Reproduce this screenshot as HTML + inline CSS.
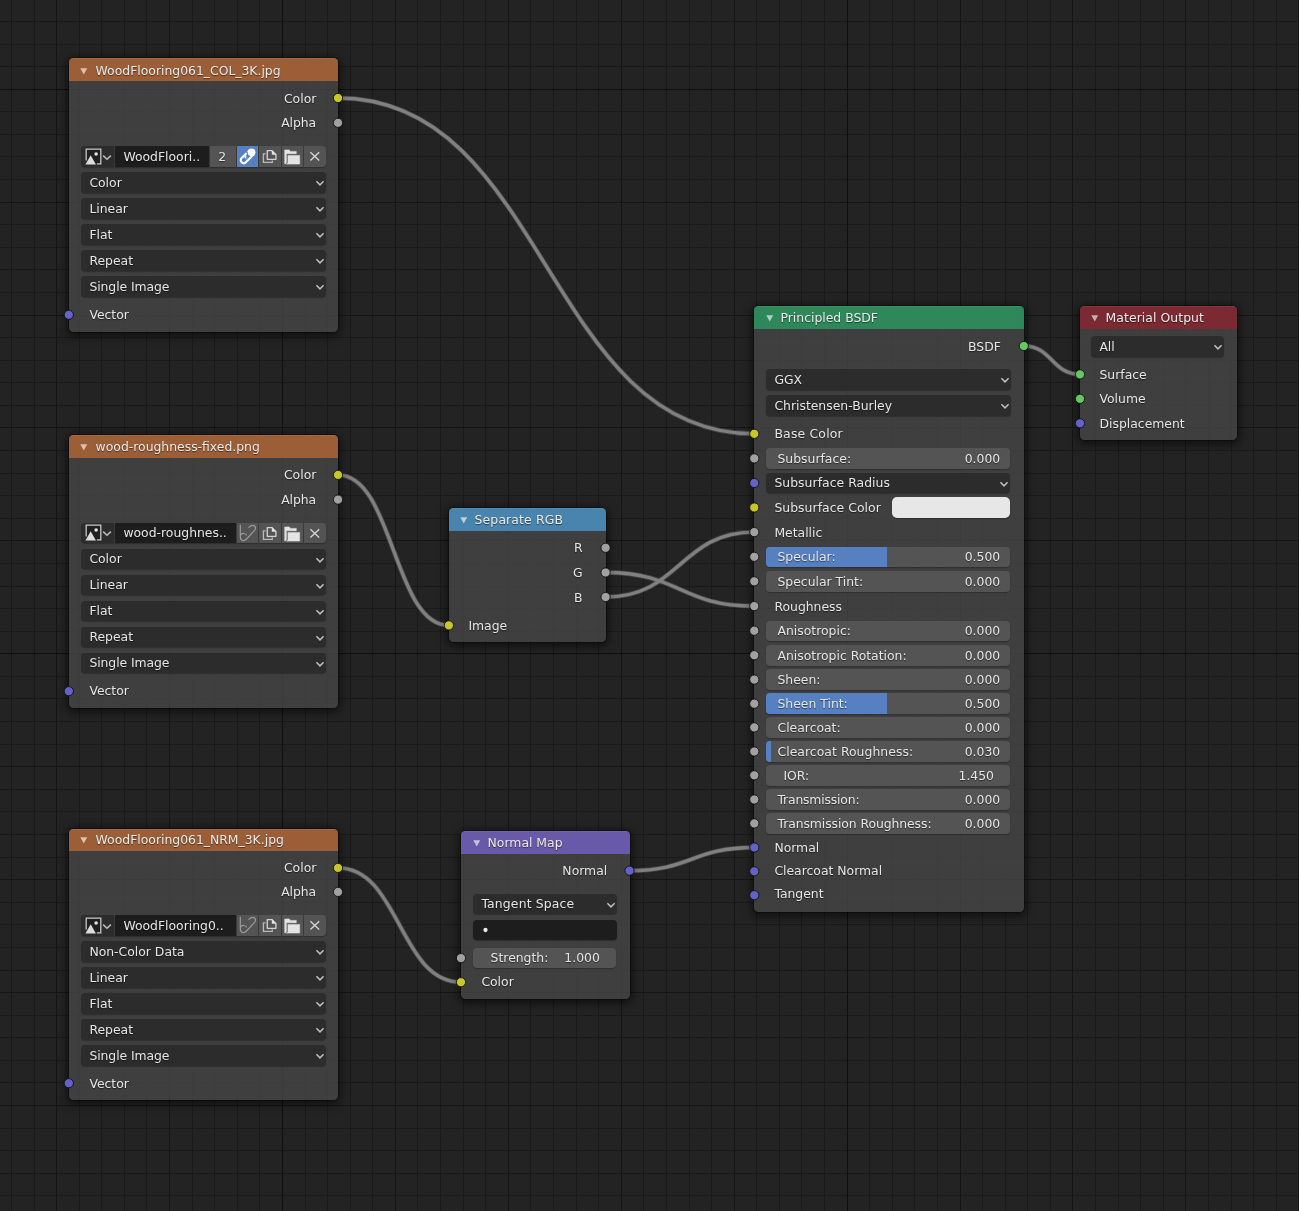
<!DOCTYPE html>
<html><head><meta charset="utf-8"><title>Shader Node Editor</title><style>
html,body{margin:0;padding:0}
body{width:1299px;height:1211px;overflow:hidden;background:#232323;position:relative;
 font-family:"DejaVu Sans","Liberation Sans",sans-serif;font-size:12.4px;color:#e6e6e6}
.abs{position:absolute;display:block}
.layer{position:absolute;left:0;top:0}
.t{position:absolute;white-space:nowrap;letter-spacing:0px;line-height:16px;height:16px;text-shadow:0 1px 1px rgba(0,0,0,0.55)}
.title{color:#ececec}
.node{position:absolute;border-radius:4.5px;background:rgba(70,70,70,0.80);overflow:hidden;
 box-shadow:0 0 0 0.8px rgba(0,0,0,0.4),0 2px 10px 2px rgba(0,0,0,0.6)}
.hd{position:absolute;left:0;top:0;right:0;opacity:0.97;box-shadow:inset 0 1px 0 rgba(255,255,255,0.07)}
.dd{position:absolute;background:#2c2c2c;border-radius:4px;box-shadow:0 1px 1px rgba(0,0,0,0.25)}
.tf{position:absolute;background:#1d1d1d;box-shadow:0 1px 1px rgba(0,0,0,0.25)}
.btn{position:absolute;background:#545454;box-shadow:0 1px 1px rgba(0,0,0,0.25)}
.nf{position:absolute;background:#545454;border-radius:4px;overflow:hidden;box-shadow:0 1px 1px rgba(0,0,0,0.25)}
.nf .fill{position:absolute;left:0;top:0;bottom:0;background:#5680c2}
.sw{position:absolute;background:#e7e7e7;border-radius:5px;box-shadow:0 1px 1px rgba(0,0,0,0.25)}
</style></head><body>
<svg class="layer" width="1299" height="1211" viewBox="0 0 1299 1211" shape-rendering="crispEdges"><rect x="11" y="0" width="1" height="1211" fill="#1a1a1a"/><rect x="34" y="0" width="1" height="1211" fill="#1a1a1a"/><rect x="79" y="0" width="1" height="1211" fill="#1a1a1a"/><rect x="101" y="0" width="1" height="1211" fill="#1a1a1a"/><rect x="124" y="0" width="1" height="1211" fill="#1a1a1a"/><rect x="146" y="0" width="1" height="1211" fill="#1a1a1a"/><rect x="192" y="0" width="1" height="1211" fill="#1a1a1a"/><rect x="214" y="0" width="1" height="1211" fill="#1a1a1a"/><rect x="237" y="0" width="1" height="1211" fill="#1a1a1a"/><rect x="259" y="0" width="1" height="1211" fill="#1a1a1a"/><rect x="305" y="0" width="1" height="1211" fill="#1a1a1a"/><rect x="327" y="0" width="1" height="1211" fill="#1a1a1a"/><rect x="350" y="0" width="1" height="1211" fill="#1a1a1a"/><rect x="372" y="0" width="1" height="1211" fill="#1a1a1a"/><rect x="417" y="0" width="1" height="1211" fill="#1a1a1a"/><rect x="440" y="0" width="1" height="1211" fill="#1a1a1a"/><rect x="463" y="0" width="1" height="1211" fill="#1a1a1a"/><rect x="485" y="0" width="1" height="1211" fill="#1a1a1a"/><rect x="530" y="0" width="1" height="1211" fill="#1a1a1a"/><rect x="553" y="0" width="1" height="1211" fill="#1a1a1a"/><rect x="576" y="0" width="1" height="1211" fill="#1a1a1a"/><rect x="598" y="0" width="1" height="1211" fill="#1a1a1a"/><rect x="643" y="0" width="1" height="1211" fill="#1a1a1a"/><rect x="666" y="0" width="1" height="1211" fill="#1a1a1a"/><rect x="689" y="0" width="1" height="1211" fill="#1a1a1a"/><rect x="711" y="0" width="1" height="1211" fill="#1a1a1a"/><rect x="756" y="0" width="1" height="1211" fill="#1a1a1a"/><rect x="779" y="0" width="1" height="1211" fill="#1a1a1a"/><rect x="801" y="0" width="1" height="1211" fill="#1a1a1a"/><rect x="824" y="0" width="1" height="1211" fill="#1a1a1a"/><rect x="869" y="0" width="1" height="1211" fill="#1a1a1a"/><rect x="892" y="0" width="1" height="1211" fill="#1a1a1a"/><rect x="914" y="0" width="1" height="1211" fill="#1a1a1a"/><rect x="937" y="0" width="1" height="1211" fill="#1a1a1a"/><rect x="982" y="0" width="1" height="1211" fill="#1a1a1a"/><rect x="1005" y="0" width="1" height="1211" fill="#1a1a1a"/><rect x="1027" y="0" width="1" height="1211" fill="#1a1a1a"/><rect x="1050" y="0" width="1" height="1211" fill="#1a1a1a"/><rect x="1095" y="0" width="1" height="1211" fill="#1a1a1a"/><rect x="1118" y="0" width="1" height="1211" fill="#1a1a1a"/><rect x="1140" y="0" width="1" height="1211" fill="#1a1a1a"/><rect x="1163" y="0" width="1" height="1211" fill="#1a1a1a"/><rect x="1208" y="0" width="1" height="1211" fill="#1a1a1a"/><rect x="1231" y="0" width="1" height="1211" fill="#1a1a1a"/><rect x="1253" y="0" width="1" height="1211" fill="#1a1a1a"/><rect x="1276" y="0" width="1" height="1211" fill="#1a1a1a"/><rect x="0" y="21" width="1299" height="1" fill="#1a1a1a"/><rect x="0" y="44" width="1299" height="1" fill="#1a1a1a"/><rect x="0" y="66" width="1299" height="1" fill="#1a1a1a"/><rect x="0" y="111" width="1299" height="1" fill="#1a1a1a"/><rect x="0" y="134" width="1299" height="1" fill="#1a1a1a"/><rect x="0" y="156" width="1299" height="1" fill="#1a1a1a"/><rect x="0" y="179" width="1299" height="1" fill="#1a1a1a"/><rect x="0" y="224" width="1299" height="1" fill="#1a1a1a"/><rect x="0" y="247" width="1299" height="1" fill="#1a1a1a"/><rect x="0" y="269" width="1299" height="1" fill="#1a1a1a"/><rect x="0" y="292" width="1299" height="1" fill="#1a1a1a"/><rect x="0" y="337" width="1299" height="1" fill="#1a1a1a"/><rect x="0" y="360" width="1299" height="1" fill="#1a1a1a"/><rect x="0" y="382" width="1299" height="1" fill="#1a1a1a"/><rect x="0" y="405" width="1299" height="1" fill="#1a1a1a"/><rect x="0" y="450" width="1299" height="1" fill="#1a1a1a"/><rect x="0" y="473" width="1299" height="1" fill="#1a1a1a"/><rect x="0" y="495" width="1299" height="1" fill="#1a1a1a"/><rect x="0" y="518" width="1299" height="1" fill="#1a1a1a"/><rect x="0" y="563" width="1299" height="1" fill="#1a1a1a"/><rect x="0" y="586" width="1299" height="1" fill="#1a1a1a"/><rect x="0" y="608" width="1299" height="1" fill="#1a1a1a"/><rect x="0" y="631" width="1299" height="1" fill="#1a1a1a"/><rect x="0" y="676" width="1299" height="1" fill="#1a1a1a"/><rect x="0" y="698" width="1299" height="1" fill="#1a1a1a"/><rect x="0" y="721" width="1299" height="1" fill="#1a1a1a"/><rect x="0" y="744" width="1299" height="1" fill="#1a1a1a"/><rect x="0" y="789" width="1299" height="1" fill="#1a1a1a"/><rect x="0" y="811" width="1299" height="1" fill="#1a1a1a"/><rect x="0" y="834" width="1299" height="1" fill="#1a1a1a"/><rect x="0" y="857" width="1299" height="1" fill="#1a1a1a"/><rect x="0" y="902" width="1299" height="1" fill="#1a1a1a"/><rect x="0" y="924" width="1299" height="1" fill="#1a1a1a"/><rect x="0" y="947" width="1299" height="1" fill="#1a1a1a"/><rect x="0" y="970" width="1299" height="1" fill="#1a1a1a"/><rect x="0" y="1015" width="1299" height="1" fill="#1a1a1a"/><rect x="0" y="1037" width="1299" height="1" fill="#1a1a1a"/><rect x="0" y="1060" width="1299" height="1" fill="#1a1a1a"/><rect x="0" y="1082" width="1299" height="1" fill="#1a1a1a"/><rect x="0" y="1128" width="1299" height="1" fill="#1a1a1a"/><rect x="0" y="1150" width="1299" height="1" fill="#1a1a1a"/><rect x="0" y="1173" width="1299" height="1" fill="#1a1a1a"/><rect x="0" y="1195" width="1299" height="1" fill="#1a1a1a"/><rect x="56" y="0" width="1" height="1211" fill="#151515"/><rect x="169" y="0" width="1" height="1211" fill="#151515"/><rect x="395" y="0" width="1" height="1211" fill="#151515"/><rect x="508" y="0" width="1" height="1211" fill="#151515"/><rect x="621" y="0" width="1" height="1211" fill="#151515"/><rect x="734" y="0" width="1" height="1211" fill="#151515"/><rect x="960" y="0" width="1" height="1211" fill="#151515"/><rect x="1072" y="0" width="1" height="1211" fill="#151515"/><rect x="1185" y="0" width="1" height="1211" fill="#151515"/><rect x="1298" y="0" width="1" height="1211" fill="#151515"/><rect x="0" y="202" width="1299" height="1" fill="#151515"/><rect x="0" y="315" width="1299" height="1" fill="#151515"/><rect x="0" y="427" width="1299" height="1" fill="#151515"/><rect x="0" y="540" width="1299" height="1" fill="#151515"/><rect x="0" y="766" width="1299" height="1" fill="#151515"/><rect x="0" y="879" width="1299" height="1" fill="#151515"/><rect x="0" y="992" width="1299" height="1" fill="#151515"/><rect x="0" y="1105" width="1299" height="1" fill="#151515"/><rect x="282" y="0" width="1" height="1211" fill="#0f0f0f"/><rect x="847" y="0" width="1" height="1211" fill="#0f0f0f"/><rect x="0" y="89" width="1299" height="1" fill="#0f0f0f"/><rect x="0" y="653" width="1299" height="1" fill="#0f0f0f"/></svg>
<svg class="layer" width="1299" height="1211" viewBox="0 0 1299 1211"><path d="M338.00 98.00 C546.15 98.00 546.15 433.80 754.30 433.80" stroke="#808080" stroke-opacity="0.35" stroke-width="5.0" fill="none"/><path d="M338.00 98.00 C546.15 98.00 546.15 433.80 754.30 433.80" stroke="#808080" stroke-width="3.3" fill="none"/><path d="M338.00 474.90 C393.45 474.90 393.45 625.40 448.90 625.40" stroke="#808080" stroke-opacity="0.35" stroke-width="5.0" fill="none"/><path d="M338.00 474.90 C393.45 474.90 393.45 625.40 448.90 625.40" stroke="#808080" stroke-width="3.3" fill="none"/><path d="M605.60 572.50 C679.95 572.50 679.95 606.10 754.30 606.10" stroke="#808080" stroke-opacity="0.35" stroke-width="5.0" fill="none"/><path d="M605.60 572.50 C679.95 572.50 679.95 606.10 754.30 606.10" stroke="#808080" stroke-width="3.3" fill="none"/><path d="M605.60 597.00 C679.95 597.00 679.95 532.10 754.30 532.10" stroke="#808080" stroke-opacity="0.35" stroke-width="5.0" fill="none"/><path d="M605.60 597.00 C679.95 597.00 679.95 532.10 754.30 532.10" stroke="#808080" stroke-width="3.3" fill="none"/><path d="M338.00 867.90 C399.50 867.90 399.50 982.20 461.00 982.20" stroke="#808080" stroke-opacity="0.35" stroke-width="5.0" fill="none"/><path d="M338.00 867.90 C399.50 867.90 399.50 982.20 461.00 982.20" stroke="#808080" stroke-width="3.3" fill="none"/><path d="M629.50 870.70 C691.90 870.70 691.90 847.50 754.30 847.50" stroke="#808080" stroke-opacity="0.35" stroke-width="5.0" fill="none"/><path d="M629.50 870.70 C691.90 870.70 691.90 847.50 754.30 847.50" stroke="#808080" stroke-width="3.3" fill="none"/><path d="M1023.80 346.00 C1051.90 346.00 1051.90 374.40 1080.00 374.40" stroke="#808080" stroke-opacity="0.35" stroke-width="5.0" fill="none"/><path d="M1023.80 346.00 C1051.90 346.00 1051.90 374.40 1080.00 374.40" stroke="#808080" stroke-width="3.3" fill="none"/></svg>
<div id="ui" style="position:absolute;left:0;top:0;width:1299px;height:1211px;will-change:transform">
<div class="node" style="left:69.10px;top:58.10px;width:269.00px;height:273.65px;"><div class="hd" style="height:22.90px;background:#a06138"></div></div>
<svg class="abs" style="left:80.00px;top:68.20px" width="8" height="7" viewBox="0 0 8 7"><path d="M0.3 0.3 L7.2 0.3 L3.75 6.6 Z" fill="rgba(255,255,255,0.62)"/></svg>
<div class="t title" style="left:95.60px;top:63px;">WoodFlooring061_COL_3K.jpg</div>
<div class="t " style="right:982.70px;top:91px;text-align:right;">Color</div>
<div class="t " style="right:983.00px;top:115px;text-align:right;letter-spacing:-0.08px;">Alpha</div>
<div class="dd" style="left:81px;top:146px;width:33px;height:21px;border-radius:4px 0 0 4px"></div>
<svg class="abs" style="left:85.00px;top:147.60px" width="18" height="18" viewBox="0 0 18 18">
<path d="M1.2 12.6 V1.2 H15.8 V15.9 H11.9" fill="none" stroke="#c6c6c6" stroke-width="1.3"/>
<rect x="2.0" y="2.0" width="13.0" height="13.0" fill="#202020"/>
<path d="M0.5 16.5 L5.7 7.2 L10.9 16.5 Z" fill="#dcdcdc"/>
<circle cx="11.1" cy="6.0" r="1.8" fill="#e2e2e2"/></svg>
<svg class="abs" style="left:102.40px;top:153.60px" width="10" height="7" viewBox="0 0 10 7"><path d="M1.15 1.6 L5.0 5.3 L8.85 1.6" fill="none" stroke="#bcbcbc" stroke-width="1.5"/></svg>
<div class="tf" style="left:115px;top:146px;width:94px;height:21px;"></div>
<div class="btn" style="left:210px;top:146px;width:26px;height:21px;"></div>
<div class="t " style="left:209.30px;width:26.00px;top:149px;text-align:center;">2</div>
<div class="btn" style="left:237px;top:146px;width:21px;height:21px;background:#5680c2"></div>
<svg class="abs" style="left:237.00px;top:146.00px" width="21" height="21" viewBox="0 0 21 21">
<path d="M12.85 8.05 L14.6 6.3" stroke="#fff" stroke-width="7.7" fill="none"/>
<circle cx="14.6" cy="6.3" r="3.85" fill="#fff"/>
<path d="M9.0 7.7 L4.61 12.11 A2.95 2.95 0 0 0 8.79 16.29 L14.94 10.14" stroke="#fff" stroke-width="2.1" stroke-linecap="round" fill="none"/>
<path d="M7.9 9.7 L9.0 12.6 M7.5 11.3 L9.6 10.7" stroke="#fff" stroke-width="1.1" fill="none"/>
</svg>
<div class="t " style="left:123.40px;top:149px;">WoodFloori..</div>
<div class="btn" style="left:259px;top:146px;width:22px;height:21px;"></div>
<svg class="abs" style="left:262.30px;top:148.90px" width="16" height="16" viewBox="0 0 16 16">
<path d="M3.6 4.9 H1.4 V13.4 H10.3 V11.6" fill="none" stroke="#b8b8b8" stroke-width="1.3"/>
<path d="M5.25 1.65 H10.0 L13.95 5.6 V10.35 H5.25 Z" fill="none" stroke="#d4d4d4" stroke-width="1.3" stroke-linejoin="round"/>
<path d="M9.8 1.0 L14.6 5.8 H9.8 Z" fill="#e2e2e2"/></svg>
<div class="btn" style="left:282px;top:146px;width:21px;height:21px;"></div>
<svg class="abs" style="left:284.40px;top:148.90px" width="17" height="16" viewBox="0 0 17 16">
<path d="M0.7 0.9 H5.4 L6.2 2.4 H12.3 V4.7 H2.4 V13.6 Q2.4 14.9 0.7 14.9 Z" fill="#e4e4e4" stroke="#e4e4e4" stroke-width="0.5" stroke-linejoin="round"/>
<path d="M3.9 6.4 H15.7 V15.1 H2.4 Q3.9 15.1 3.9 13.6 Z" fill="#e4e4e4" stroke="#e4e4e4" stroke-width="0.5" stroke-linejoin="round"/></svg>
<div class="btn" style="left:304px;top:146px;width:22px;height:21px;border-radius:0 4px 4px 0"></div>
<svg class="abs" style="left:309.30px;top:151.10px" width="12" height="11" viewBox="0 0 12 11">
<path d="M1.4 1.35 L10.2 9.5 M10.2 1.35 L1.4 9.5" fill="none" stroke="#d6d6d6" stroke-width="1.35"/></svg>
<div class="dd" style="left:81px;top:172px;width:245px;height:21px;"></div>
<div class="t " style="left:89.40px;top:175px;">Color</div>
<svg class="abs" style="left:313.70px;top:178.10px" width="12" height="10" viewBox="0 0 12 10"><path d="M2.40 3.15 L6 6.85 L9.60 3.15" fill="none" stroke="#c0c0c0" stroke-width="1.45"/></svg>
<div class="dd" style="left:81px;top:198px;width:245px;height:21px;"></div>
<div class="t " style="left:89.40px;top:201px;">Linear</div>
<svg class="abs" style="left:313.70px;top:204.10px" width="12" height="10" viewBox="0 0 12 10"><path d="M2.40 3.15 L6 6.85 L9.60 3.15" fill="none" stroke="#c0c0c0" stroke-width="1.45"/></svg>
<div class="dd" style="left:81px;top:224px;width:245px;height:21px;"></div>
<div class="t " style="left:89.40px;top:227px;">Flat</div>
<svg class="abs" style="left:313.70px;top:230.10px" width="12" height="10" viewBox="0 0 12 10"><path d="M2.40 3.15 L6 6.85 L9.60 3.15" fill="none" stroke="#c0c0c0" stroke-width="1.45"/></svg>
<div class="dd" style="left:81px;top:250px;width:245px;height:21px;"></div>
<div class="t " style="left:89.40px;top:253px;">Repeat</div>
<svg class="abs" style="left:313.70px;top:256.10px" width="12" height="10" viewBox="0 0 12 10"><path d="M2.40 3.15 L6 6.85 L9.60 3.15" fill="none" stroke="#c0c0c0" stroke-width="1.45"/></svg>
<div class="dd" style="left:81px;top:276px;width:245px;height:21px;"></div>
<div class="t " style="left:89.40px;top:279px;letter-spacing:-0.07px;">Single Image</div>
<svg class="abs" style="left:313.70px;top:282.10px" width="12" height="10" viewBox="0 0 12 10"><path d="M2.40 3.15 L6 6.85 L9.60 3.15" fill="none" stroke="#c0c0c0" stroke-width="1.45"/></svg>
<div class="t " style="left:89.40px;top:307px;">Vector</div>
<div class="node" style="left:69.10px;top:434.70px;width:269.00px;height:273.05px;"><div class="hd" style="height:23.20px;background:#a06138"></div></div>
<svg class="abs" style="left:80.00px;top:444.20px" width="8" height="7" viewBox="0 0 8 7"><path d="M0.3 0.3 L7.2 0.3 L3.75 6.6 Z" fill="rgba(255,255,255,0.62)"/></svg>
<div class="t title" style="left:95.60px;top:439px;">wood-roughness-fixed.png</div>
<div class="t " style="right:982.70px;top:467px;text-align:right;">Color</div>
<div class="t " style="right:983.00px;top:492px;text-align:right;letter-spacing:-0.08px;">Alpha</div>
<div class="dd" style="left:81px;top:523px;width:33px;height:20px;border-radius:4px 0 0 4px"></div>
<svg class="abs" style="left:85.00px;top:524.20px" width="18" height="18" viewBox="0 0 18 18">
<path d="M1.2 12.6 V1.2 H15.8 V15.9 H11.9" fill="none" stroke="#c6c6c6" stroke-width="1.3"/>
<rect x="2.0" y="2.0" width="13.0" height="13.0" fill="#202020"/>
<path d="M0.5 16.5 L5.7 7.2 L10.9 16.5 Z" fill="#dcdcdc"/>
<circle cx="11.1" cy="6.0" r="1.8" fill="#e2e2e2"/></svg>
<svg class="abs" style="left:102.40px;top:530.20px" width="10" height="7" viewBox="0 0 10 7"><path d="M1.15 1.6 L5.0 5.3 L8.85 1.6" fill="none" stroke="#bcbcbc" stroke-width="1.5"/></svg>
<div class="tf" style="left:115px;top:523px;width:121px;height:20px;"></div>
<div class="btn" style="left:237px;top:523px;width:21px;height:20px;"></div>
<svg class="abs" style="left:237.00px;top:523.00px" width="21" height="21" viewBox="0 0 21 21">
<path d="M3.35 2.1 V13.5 C3.35 16.5 5 17.7 6.6 17.7 C8 17.7 9 16.6 10 15.5 L17.4 7.6 C19 5.6 18.8 3.4 17 2.6 C15.4 1.9 13.5 2.8 12 4.2 M3.9 11.5 C5.5 10 7.8 10.2 9.3 11.9" stroke="#989898" stroke-width="1.25" fill="none" stroke-linecap="round"/>
</svg>
<div class="t " style="left:123.40px;top:525px;">wood-roughnes..</div>
<div class="btn" style="left:259px;top:523px;width:22px;height:20px;"></div>
<svg class="abs" style="left:262.30px;top:525.50px" width="16" height="16" viewBox="0 0 16 16">
<path d="M3.6 4.9 H1.4 V13.4 H10.3 V11.6" fill="none" stroke="#b8b8b8" stroke-width="1.3"/>
<path d="M5.25 1.65 H10.0 L13.95 5.6 V10.35 H5.25 Z" fill="none" stroke="#d4d4d4" stroke-width="1.3" stroke-linejoin="round"/>
<path d="M9.8 1.0 L14.6 5.8 H9.8 Z" fill="#e2e2e2"/></svg>
<div class="btn" style="left:282px;top:523px;width:21px;height:20px;"></div>
<svg class="abs" style="left:284.40px;top:525.50px" width="17" height="16" viewBox="0 0 17 16">
<path d="M0.7 0.9 H5.4 L6.2 2.4 H12.3 V4.7 H2.4 V13.6 Q2.4 14.9 0.7 14.9 Z" fill="#e4e4e4" stroke="#e4e4e4" stroke-width="0.5" stroke-linejoin="round"/>
<path d="M3.9 6.4 H15.7 V15.1 H2.4 Q3.9 15.1 3.9 13.6 Z" fill="#e4e4e4" stroke="#e4e4e4" stroke-width="0.5" stroke-linejoin="round"/></svg>
<div class="btn" style="left:304px;top:523px;width:22px;height:20px;border-radius:0 4px 4px 0"></div>
<svg class="abs" style="left:309.30px;top:527.70px" width="12" height="11" viewBox="0 0 12 11">
<path d="M1.4 1.35 L10.2 9.5 M10.2 1.35 L1.4 9.5" fill="none" stroke="#d6d6d6" stroke-width="1.35"/></svg>
<div class="dd" style="left:81px;top:549px;width:245px;height:20px;"></div>
<div class="t " style="left:89.40px;top:551px;">Color</div>
<svg class="abs" style="left:313.70px;top:554.75px" width="12" height="10" viewBox="0 0 12 10"><path d="M2.40 3.15 L6 6.85 L9.60 3.15" fill="none" stroke="#c0c0c0" stroke-width="1.45"/></svg>
<div class="dd" style="left:81px;top:575px;width:245px;height:20px;"></div>
<div class="t " style="left:89.40px;top:577px;">Linear</div>
<svg class="abs" style="left:313.70px;top:580.75px" width="12" height="10" viewBox="0 0 12 10"><path d="M2.40 3.15 L6 6.85 L9.60 3.15" fill="none" stroke="#c0c0c0" stroke-width="1.45"/></svg>
<div class="dd" style="left:81px;top:601px;width:245px;height:20px;"></div>
<div class="t " style="left:89.40px;top:603px;">Flat</div>
<svg class="abs" style="left:313.70px;top:606.75px" width="12" height="10" viewBox="0 0 12 10"><path d="M2.40 3.15 L6 6.85 L9.60 3.15" fill="none" stroke="#c0c0c0" stroke-width="1.45"/></svg>
<div class="dd" style="left:81px;top:627px;width:245px;height:20px;"></div>
<div class="t " style="left:89.40px;top:629px;">Repeat</div>
<svg class="abs" style="left:313.70px;top:632.75px" width="12" height="10" viewBox="0 0 12 10"><path d="M2.40 3.15 L6 6.85 L9.60 3.15" fill="none" stroke="#c0c0c0" stroke-width="1.45"/></svg>
<div class="dd" style="left:81px;top:653px;width:245px;height:20px;"></div>
<div class="t " style="left:89.40px;top:655px;letter-spacing:-0.07px;">Single Image</div>
<svg class="abs" style="left:313.70px;top:658.75px" width="12" height="10" viewBox="0 0 12 10"><path d="M2.40 3.15 L6 6.85 L9.60 3.15" fill="none" stroke="#c0c0c0" stroke-width="1.45"/></svg>
<div class="t " style="left:89.40px;top:683px;">Vector</div>
<div class="node" style="left:69.10px;top:828.70px;width:269.00px;height:271.20px;"><div class="hd" style="height:22.40px;background:#a06138"></div></div>
<svg class="abs" style="left:80.00px;top:837.20px" width="8" height="7" viewBox="0 0 8 7"><path d="M0.3 0.3 L7.2 0.3 L3.75 6.6 Z" fill="rgba(255,255,255,0.62)"/></svg>
<div class="t title" style="left:95.60px;top:832px;">WoodFlooring061_NRM_3K.jpg</div>
<div class="t " style="right:982.70px;top:860px;text-align:right;">Color</div>
<div class="t " style="right:983.00px;top:884px;text-align:right;letter-spacing:-0.08px;">Alpha</div>
<div class="dd" style="left:81px;top:915px;width:33px;height:21px;border-radius:4px 0 0 4px"></div>
<svg class="abs" style="left:85.00px;top:916.60px" width="18" height="18" viewBox="0 0 18 18">
<path d="M1.2 12.6 V1.2 H15.8 V15.9 H11.9" fill="none" stroke="#c6c6c6" stroke-width="1.3"/>
<rect x="2.0" y="2.0" width="13.0" height="13.0" fill="#202020"/>
<path d="M0.5 16.5 L5.7 7.2 L10.9 16.5 Z" fill="#dcdcdc"/>
<circle cx="11.1" cy="6.0" r="1.8" fill="#e2e2e2"/></svg>
<svg class="abs" style="left:102.40px;top:922.60px" width="10" height="7" viewBox="0 0 10 7"><path d="M1.15 1.6 L5.0 5.3 L8.85 1.6" fill="none" stroke="#bcbcbc" stroke-width="1.5"/></svg>
<div class="tf" style="left:115px;top:915px;width:121px;height:21px;"></div>
<div class="btn" style="left:237px;top:915px;width:21px;height:21px;"></div>
<svg class="abs" style="left:237.00px;top:915.00px" width="21" height="21" viewBox="0 0 21 21">
<path d="M3.35 2.1 V13.5 C3.35 16.5 5 17.7 6.6 17.7 C8 17.7 9 16.6 10 15.5 L17.4 7.6 C19 5.6 18.8 3.4 17 2.6 C15.4 1.9 13.5 2.8 12 4.2 M3.9 11.5 C5.5 10 7.8 10.2 9.3 11.9" stroke="#989898" stroke-width="1.25" fill="none" stroke-linecap="round"/>
</svg>
<div class="t " style="left:123.40px;top:918px;">WoodFlooring0..</div>
<div class="btn" style="left:259px;top:915px;width:22px;height:21px;"></div>
<svg class="abs" style="left:262.30px;top:917.90px" width="16" height="16" viewBox="0 0 16 16">
<path d="M3.6 4.9 H1.4 V13.4 H10.3 V11.6" fill="none" stroke="#b8b8b8" stroke-width="1.3"/>
<path d="M5.25 1.65 H10.0 L13.95 5.6 V10.35 H5.25 Z" fill="none" stroke="#d4d4d4" stroke-width="1.3" stroke-linejoin="round"/>
<path d="M9.8 1.0 L14.6 5.8 H9.8 Z" fill="#e2e2e2"/></svg>
<div class="btn" style="left:282px;top:915px;width:21px;height:21px;"></div>
<svg class="abs" style="left:284.40px;top:917.90px" width="17" height="16" viewBox="0 0 17 16">
<path d="M0.7 0.9 H5.4 L6.2 2.4 H12.3 V4.7 H2.4 V13.6 Q2.4 14.9 0.7 14.9 Z" fill="#e4e4e4" stroke="#e4e4e4" stroke-width="0.5" stroke-linejoin="round"/>
<path d="M3.9 6.4 H15.7 V15.1 H2.4 Q3.9 15.1 3.9 13.6 Z" fill="#e4e4e4" stroke="#e4e4e4" stroke-width="0.5" stroke-linejoin="round"/></svg>
<div class="btn" style="left:304px;top:915px;width:22px;height:21px;border-radius:0 4px 4px 0"></div>
<svg class="abs" style="left:309.30px;top:920.10px" width="12" height="11" viewBox="0 0 12 11">
<path d="M1.4 1.35 L10.2 9.5 M10.2 1.35 L1.4 9.5" fill="none" stroke="#d6d6d6" stroke-width="1.35"/></svg>
<div class="dd" style="left:81px;top:941px;width:245px;height:21px;"></div>
<div class="t " style="left:89.40px;top:944px;">Non-Color Data</div>
<svg class="abs" style="left:313.70px;top:947.10px" width="12" height="10" viewBox="0 0 12 10"><path d="M2.40 3.15 L6 6.85 L9.60 3.15" fill="none" stroke="#c0c0c0" stroke-width="1.45"/></svg>
<div class="dd" style="left:81px;top:967px;width:245px;height:21px;"></div>
<div class="t " style="left:89.40px;top:970px;">Linear</div>
<svg class="abs" style="left:313.70px;top:973.10px" width="12" height="10" viewBox="0 0 12 10"><path d="M2.40 3.15 L6 6.85 L9.60 3.15" fill="none" stroke="#c0c0c0" stroke-width="1.45"/></svg>
<div class="dd" style="left:81px;top:993px;width:245px;height:21px;"></div>
<div class="t " style="left:89.40px;top:996px;">Flat</div>
<svg class="abs" style="left:313.70px;top:999.10px" width="12" height="10" viewBox="0 0 12 10"><path d="M2.40 3.15 L6 6.85 L9.60 3.15" fill="none" stroke="#c0c0c0" stroke-width="1.45"/></svg>
<div class="dd" style="left:81px;top:1019px;width:245px;height:21px;"></div>
<div class="t " style="left:89.40px;top:1022px;">Repeat</div>
<svg class="abs" style="left:313.70px;top:1025.10px" width="12" height="10" viewBox="0 0 12 10"><path d="M2.40 3.15 L6 6.85 L9.60 3.15" fill="none" stroke="#c0c0c0" stroke-width="1.45"/></svg>
<div class="dd" style="left:81px;top:1045px;width:245px;height:21px;"></div>
<div class="t " style="left:89.40px;top:1048px;letter-spacing:-0.07px;">Single Image</div>
<svg class="abs" style="left:313.70px;top:1051.10px" width="12" height="10" viewBox="0 0 12 10"><path d="M2.40 3.15 L6 6.85 L9.60 3.15" fill="none" stroke="#c0c0c0" stroke-width="1.45"/></svg>
<div class="t " style="left:89.40px;top:1076px;">Vector</div>
<div class="node" style="left:448.70px;top:508.00px;width:157.20px;height:134.00px;"><div class="hd" style="height:22.80px;background:#4a88b2"></div></div>
<svg class="abs" style="left:459.70px;top:517.20px" width="8" height="7" viewBox="0 0 8 7"><path d="M0.3 0.3 L7.2 0.3 L3.75 6.6 Z" fill="rgba(255,255,255,0.62)"/></svg>
<div class="t title" style="left:474.60px;top:512px;letter-spacing:0.145px;">Separate RGB</div>
<div class="t " style="right:716.40px;top:540px;text-align:right;">R</div>
<div class="t " style="right:716.40px;top:565px;text-align:right;">G</div>
<div class="t " style="right:716.40px;top:590px;text-align:right;">B</div>
<div class="t " style="left:468.40px;top:618px;">Image</div>
<div class="node" style="left:461.00px;top:831.10px;width:168.60px;height:167.90px;"><div class="hd" style="height:22.80px;background:#6c5bae"></div></div>
<svg class="abs" style="left:472.60px;top:840.20px" width="8" height="7" viewBox="0 0 8 7"><path d="M0.3 0.3 L7.2 0.3 L3.75 6.6 Z" fill="rgba(255,255,255,0.62)"/></svg>
<div class="t title" style="left:487.60px;top:835px;">Normal Map</div>
<div class="t " style="right:691.80px;top:863px;text-align:right;">Normal</div>
<div class="dd" style="left:473px;top:894px;width:144px;height:20px;"></div>
<div class="t " style="left:481.40px;top:896px;letter-spacing:0.158px;">Tangent Space</div>
<svg class="abs" style="left:604.70px;top:899.75px" width="12" height="10" viewBox="0 0 12 10"><path d="M2.40 3.15 L6 6.85 L9.60 3.15" fill="none" stroke="#c0c0c0" stroke-width="1.45"/></svg>
<div class="tf" style="left:473px;top:920px;width:144px;height:20px;border-radius:4px"></div>
<svg class="abs" style="left:480px;top:925px" width="11" height="11" viewBox="0 0 11 11"><circle cx="5.5" cy="5.0" r="2.15" fill="#e8e8e8"/></svg>
<div class="nf" style="left:473px;top:948px;width:143px;height:20px;"></div>
<div class="t " style="left:490.60px;top:950px;">Strength:</div>
<div class="t " style="right:699.20px;top:950px;text-align:right;">1.000</div>
<div class="t " style="left:481.40px;top:974px;">Color</div>
<div class="node" style="left:754.30px;top:306.20px;width:269.70px;height:605.50px;"><div class="hd" style="height:22.80px;background:#2e8b5c"></div></div>
<svg class="abs" style="left:765.70px;top:315.20px" width="8" height="7" viewBox="0 0 8 7"><path d="M0.3 0.3 L7.2 0.3 L3.75 6.6 Z" fill="rgba(255,255,255,0.62)"/></svg>
<div class="t title" style="left:780.50px;top:310px;">Principled BSDF</div>
<div class="t " style="right:298.20px;top:339px;text-align:right;">BSDF</div>
<div class="dd" style="left:766px;top:369px;width:245px;height:21px;"></div>
<div class="t " style="left:774.40px;top:372px;">GGX</div>
<svg class="abs" style="left:998.70px;top:375.25px" width="12" height="10" viewBox="0 0 12 10"><path d="M2.40 3.15 L6 6.85 L9.60 3.15" fill="none" stroke="#c0c0c0" stroke-width="1.45"/></svg>
<div class="dd" style="left:766px;top:395px;width:245px;height:21px;"></div>
<div class="t " style="left:774.40px;top:398px;">Christensen-Burley</div>
<svg class="abs" style="left:998.70px;top:401.25px" width="12" height="10" viewBox="0 0 12 10"><path d="M2.40 3.15 L6 6.85 L9.60 3.15" fill="none" stroke="#c0c0c0" stroke-width="1.45"/></svg>
<div class="t " style="left:774.40px;top:426px;letter-spacing:0.2px;">Base Color</div>
<div class="nf" style="left:766px;top:448px;width:244px;height:21px;"></div>
<div class="t " style="left:777.50px;top:451px;">Subsurface:</div>
<div class="t " style="right:298.80px;top:451px;text-align:right;">0.000</div>
<div class="dd" style="left:766px;top:473px;width:244px;height:20px;"></div>
<div class="t " style="left:774.40px;top:475px;letter-spacing:0.044px;">Subsurface Radius</div>
<svg class="abs" style="left:997.70px;top:478.75px" width="12" height="10" viewBox="0 0 12 10"><path d="M2.40 3.15 L6 6.85 L9.60 3.15" fill="none" stroke="#c0c0c0" stroke-width="1.45"/></svg>
<div class="t " style="left:774.40px;top:500px;letter-spacing:0.047px;">Subsurface Color</div>
<div class="sw" style="left:892px;top:497px;width:118px;height:21px;"></div>
<div class="t " style="left:774.40px;top:525px;">Metallic</div>
<div class="nf" style="left:766px;top:547px;width:244px;height:20px;"><div class="fill" style="width:121px"></div></div>
<div class="t " style="left:777.50px;top:549px;">Specular:</div>
<div class="t " style="right:298.80px;top:549px;text-align:right;">0.500</div>
<div class="nf" style="left:766px;top:571px;width:244px;height:21px;"></div>
<div class="t " style="left:777.50px;top:574px;">Specular Tint:</div>
<div class="t " style="right:298.80px;top:574px;text-align:right;">0.000</div>
<div class="nf" style="left:766px;top:621px;width:244px;height:20px;"></div>
<div class="t " style="left:777.50px;top:623px;">Anisotropic:</div>
<div class="t " style="right:298.80px;top:623px;text-align:right;">0.000</div>
<div class="nf" style="left:766px;top:645px;width:244px;height:21px;"></div>
<div class="t " style="left:777.50px;top:648px;">Anisotropic Rotation:</div>
<div class="t " style="right:298.80px;top:648px;text-align:right;">0.000</div>
<div class="nf" style="left:766px;top:669px;width:244px;height:21px;"></div>
<div class="t " style="left:777.50px;top:672px;">Sheen:</div>
<div class="t " style="right:298.80px;top:672px;text-align:right;">0.000</div>
<div class="nf" style="left:766px;top:693px;width:244px;height:21px;"><div class="fill" style="width:121px"></div></div>
<div class="t " style="left:777.50px;top:696px;">Sheen Tint:</div>
<div class="t " style="right:298.80px;top:696px;text-align:right;">0.500</div>
<div class="nf" style="left:766px;top:717px;width:244px;height:21px;"></div>
<div class="t " style="left:777.50px;top:720px;">Clearcoat:</div>
<div class="t " style="right:298.80px;top:720px;text-align:right;">0.000</div>
<div class="nf" style="left:766px;top:741px;width:244px;height:21px;"><div class="fill" style="width:5px"></div></div>
<div class="t " style="left:777.50px;top:744px;letter-spacing:0.047px;">Clearcoat Roughness:</div>
<div class="t " style="right:298.80px;top:744px;text-align:right;">0.030</div>
<div class="nf" style="left:766px;top:765px;width:244px;height:21px;"></div>
<div class="t " style="left:783.40px;top:768px;">IOR:</div>
<div class="t " style="right:305.00px;top:768px;text-align:right;">1.450</div>
<div class="nf" style="left:766px;top:789px;width:244px;height:21px;"></div>
<div class="t " style="left:777.50px;top:792px;letter-spacing:-0.18px;">Transmission:</div>
<div class="t " style="right:298.80px;top:792px;text-align:right;">0.000</div>
<div class="nf" style="left:766px;top:813px;width:244px;height:21px;"></div>
<div class="t " style="left:777.50px;top:816px;letter-spacing:-0.077px;">Transmission Roughness:</div>
<div class="t " style="right:298.80px;top:816px;text-align:right;">0.000</div>
<div class="t " style="left:774.40px;top:599px;">Roughness</div>
<div class="t " style="left:774.40px;top:840px;">Normal</div>
<div class="t " style="left:774.40px;top:863px;">Clearcoat Normal</div>
<div class="t " style="left:774.40px;top:886px;">Tangent</div>
<div class="node" style="left:1080.00px;top:306.20px;width:157.00px;height:134.00px;"><div class="hd" style="height:22.70px;background:#7e2a33"></div></div>
<svg class="abs" style="left:1090.80px;top:315.20px" width="8" height="7" viewBox="0 0 8 7"><path d="M0.3 0.3 L7.2 0.3 L3.75 6.6 Z" fill="rgba(255,255,255,0.62)"/></svg>
<div class="t title" style="left:1105.60px;top:310px;letter-spacing:0.07px;">Material Output</div>
<div class="dd" style="left:1091px;top:336px;width:133px;height:21px;"></div>
<div class="t " style="left:1099.40px;top:339px;">All</div>
<svg class="abs" style="left:1211.70px;top:342.25px" width="12" height="10" viewBox="0 0 12 10"><path d="M2.40 3.15 L6 6.85 L9.60 3.15" fill="none" stroke="#c0c0c0" stroke-width="1.45"/></svg>
<div class="t " style="left:1099.50px;top:367px;">Surface</div>
<div class="t " style="left:1099.50px;top:391px;">Volume</div>
<div class="t " style="left:1099.50px;top:416px;">Displacement</div>
</div>
<svg class="layer" width="1299" height="1211" viewBox="0 0 1299 1211"><circle cx="338.00" cy="98.00" r="4.6" fill="#c7c729" stroke="#0c0c0c" stroke-width="0.85"/><circle cx="338.00" cy="122.80" r="4.6" fill="#a1a1a1" stroke="#0c0c0c" stroke-width="0.85"/><circle cx="68.80" cy="314.80" r="4.6" fill="#6363c7" stroke="#0c0c0c" stroke-width="0.85"/><circle cx="338.00" cy="474.90" r="4.6" fill="#c7c729" stroke="#0c0c0c" stroke-width="0.85"/><circle cx="338.00" cy="499.60" r="4.6" fill="#a1a1a1" stroke="#0c0c0c" stroke-width="0.85"/><circle cx="68.80" cy="691.20" r="4.6" fill="#6363c7" stroke="#0c0c0c" stroke-width="0.85"/><circle cx="338.00" cy="867.90" r="4.6" fill="#c7c729" stroke="#0c0c0c" stroke-width="0.85"/><circle cx="338.00" cy="891.90" r="4.6" fill="#a1a1a1" stroke="#0c0c0c" stroke-width="0.85"/><circle cx="68.80" cy="1083.20" r="4.6" fill="#6363c7" stroke="#0c0c0c" stroke-width="0.85"/><circle cx="605.60" cy="547.80" r="4.6" fill="#a1a1a1" stroke="#0c0c0c" stroke-width="0.85"/><circle cx="605.60" cy="572.50" r="4.6" fill="#a1a1a1" stroke="#0c0c0c" stroke-width="0.85"/><circle cx="605.60" cy="597.00" r="4.6" fill="#a1a1a1" stroke="#0c0c0c" stroke-width="0.85"/><circle cx="448.90" cy="625.40" r="4.6" fill="#c7c729" stroke="#0c0c0c" stroke-width="0.85"/><circle cx="629.50" cy="870.70" r="4.6" fill="#6363c7" stroke="#0c0c0c" stroke-width="0.85"/><circle cx="461.00" cy="958.10" r="4.6" fill="#a1a1a1" stroke="#0c0c0c" stroke-width="0.85"/><circle cx="461.00" cy="982.20" r="4.6" fill="#c7c729" stroke="#0c0c0c" stroke-width="0.85"/><circle cx="1023.80" cy="346.00" r="4.6" fill="#63c763" stroke="#0c0c0c" stroke-width="0.85"/><circle cx="754.30" cy="433.80" r="4.6" fill="#c7c729" stroke="#0c0c0c" stroke-width="0.85"/><circle cx="754.30" cy="458.40" r="4.6" fill="#a1a1a1" stroke="#0c0c0c" stroke-width="0.85"/><circle cx="754.30" cy="483.00" r="4.6" fill="#6363c7" stroke="#0c0c0c" stroke-width="0.85"/><circle cx="754.30" cy="507.50" r="4.6" fill="#c7c729" stroke="#0c0c0c" stroke-width="0.85"/><circle cx="754.30" cy="532.10" r="4.6" fill="#a1a1a1" stroke="#0c0c0c" stroke-width="0.85"/><circle cx="754.30" cy="556.80" r="4.6" fill="#a1a1a1" stroke="#0c0c0c" stroke-width="0.85"/><circle cx="754.30" cy="581.30" r="4.6" fill="#a1a1a1" stroke="#0c0c0c" stroke-width="0.85"/><circle cx="754.30" cy="630.70" r="4.6" fill="#a1a1a1" stroke="#0c0c0c" stroke-width="0.85"/><circle cx="754.30" cy="655.20" r="4.6" fill="#a1a1a1" stroke="#0c0c0c" stroke-width="0.85"/><circle cx="754.30" cy="679.60" r="4.6" fill="#a1a1a1" stroke="#0c0c0c" stroke-width="0.85"/><circle cx="754.30" cy="703.70" r="4.6" fill="#a1a1a1" stroke="#0c0c0c" stroke-width="0.85"/><circle cx="754.30" cy="727.40" r="4.6" fill="#a1a1a1" stroke="#0c0c0c" stroke-width="0.85"/><circle cx="754.30" cy="751.50" r="4.6" fill="#a1a1a1" stroke="#0c0c0c" stroke-width="0.85"/><circle cx="754.30" cy="775.30" r="4.6" fill="#a1a1a1" stroke="#0c0c0c" stroke-width="0.85"/><circle cx="754.30" cy="799.50" r="4.6" fill="#a1a1a1" stroke="#0c0c0c" stroke-width="0.85"/><circle cx="754.30" cy="823.40" r="4.6" fill="#a1a1a1" stroke="#0c0c0c" stroke-width="0.85"/><circle cx="754.30" cy="606.10" r="4.6" fill="#a1a1a1" stroke="#0c0c0c" stroke-width="0.85"/><circle cx="754.30" cy="847.50" r="4.6" fill="#6363c7" stroke="#0c0c0c" stroke-width="0.85"/><circle cx="754.30" cy="871.30" r="4.6" fill="#6363c7" stroke="#0c0c0c" stroke-width="0.85"/><circle cx="754.30" cy="895.20" r="4.6" fill="#6363c7" stroke="#0c0c0c" stroke-width="0.85"/><circle cx="1080.00" cy="374.40" r="4.6" fill="#63c763" stroke="#0c0c0c" stroke-width="0.85"/><circle cx="1080.00" cy="398.80" r="4.6" fill="#63c763" stroke="#0c0c0c" stroke-width="0.85"/><circle cx="1080.00" cy="423.30" r="4.6" fill="#6363c7" stroke="#0c0c0c" stroke-width="0.85"/></svg>
</body></html>
